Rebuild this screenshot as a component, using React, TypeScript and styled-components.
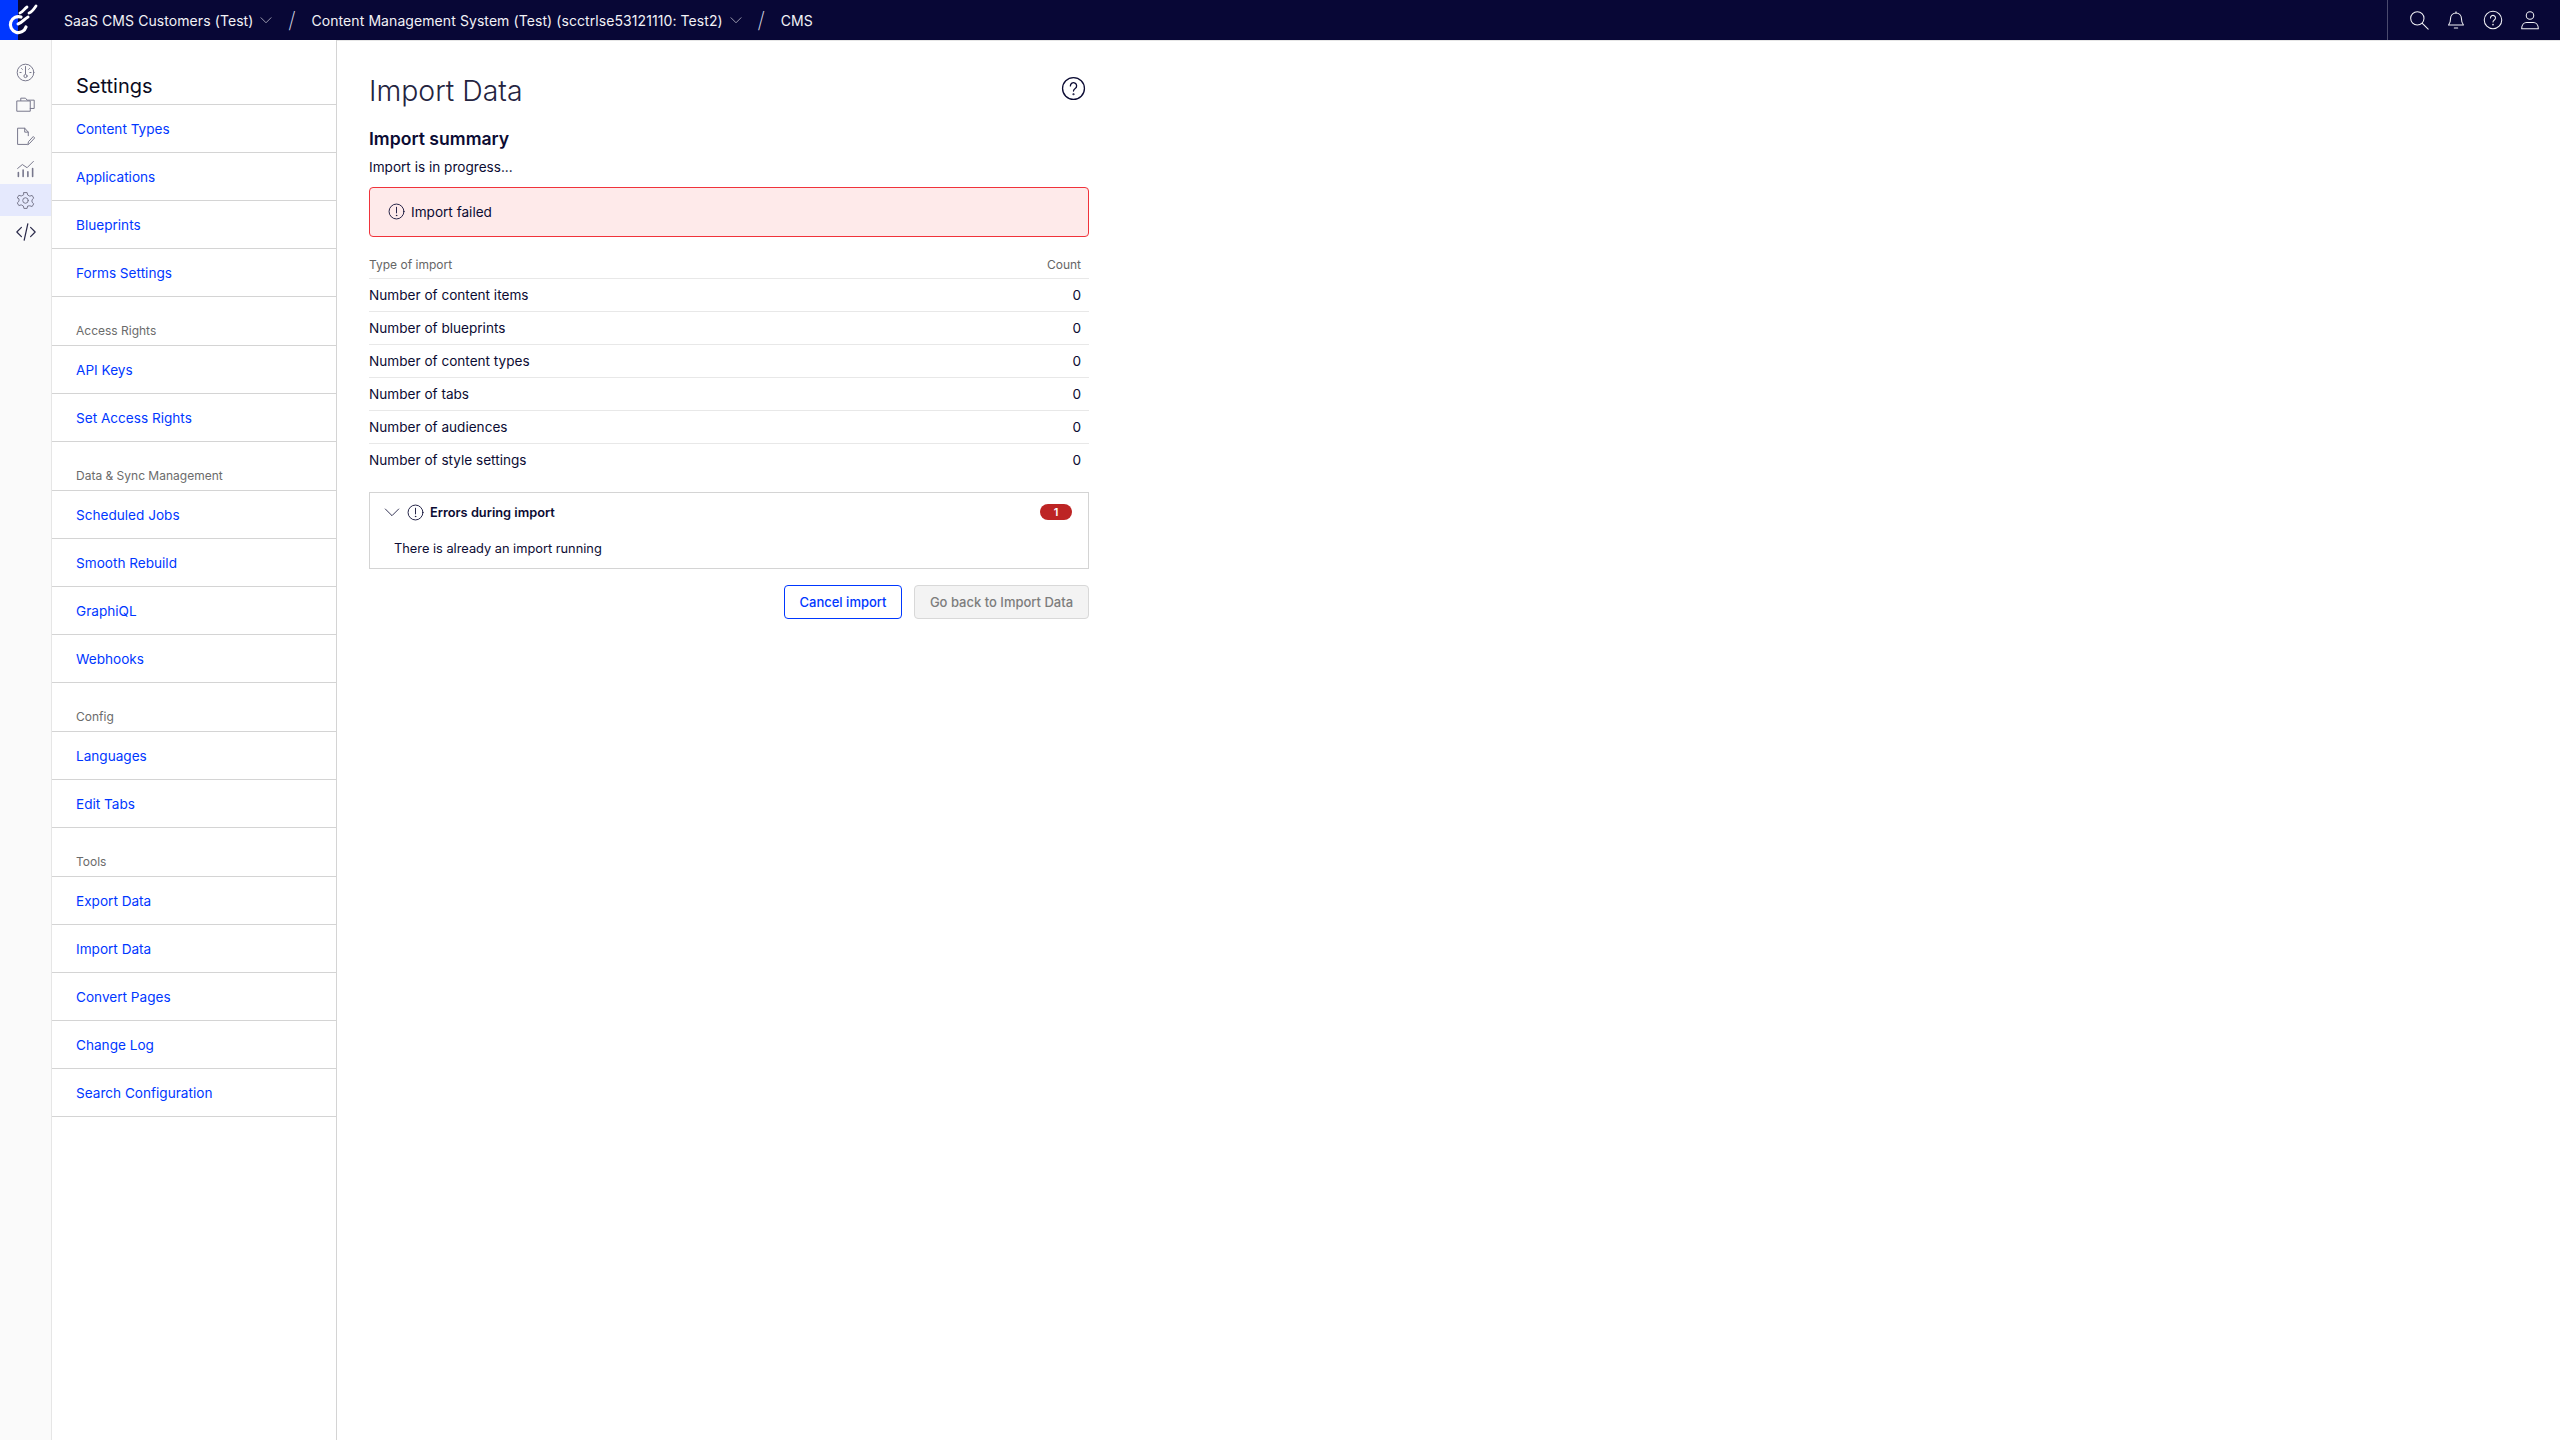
import React, { FunctionComponent } from "react";
import styled, { createGlobalStyle } from "styled-components";

const GlobalStyle = createGlobalStyle`
  html, body { margin: 0; padding: 0; background: #fff; }
  body { font-family: Inter, "Liberation Sans", sans-serif; color: #0b0b33; font-size: 13.6px; }
  * { box-sizing: border-box; }
`;

type Section = { label?: string; items: string[] };

const SECTIONS: Section[] = [
  { items: ["Content Types", "Applications", "Blueprints", "Forms Settings"] },
  { label: "Access Rights", items: ["API Keys", "Set Access Rights"] },
  { label: "Data & Sync Management", items: ["Scheduled Jobs", "Smooth Rebuild", "GraphiQL", "Webhooks"] },
  { label: "Config", items: ["Languages", "Edit Tabs"] },
  { label: "Tools", items: ["Export Data", "Import Data", "Convert Pages", "Change Log", "Search Configuration"] },
];

const ROWS = [
  "Number of content items",
  "Number of blueprints",
  "Number of content types",
  "Number of tabs",
  "Number of audiences",
  "Number of style settings",
];

const Svg: FunctionComponent<{ size: number; children: React.ReactNode }> = ({ size, children }) => (
  <svg width={size} height={size} viewBox="0 0 24 24" fill="none" stroke="currentColor" strokeWidth={1.25} strokeLinecap="round" strokeLinejoin="round">
    {children}
  </svg>
);

const Chevron = ({ size = 14 }: { size?: number }) => (
  <Svg size={size}><path d="M2 7.500l10 10 10-10" /></Svg>
);

const AlertIcon = ({ size = 16 }: { size?: number }) => (
  <Svg size={size}>
    <circle cx="12" cy="12" r="10.5" />
    <path d="M12 6v8" />
    <circle cx="12" cy="17.5" r=".4" />
  </Svg>
);

const HelpIcon = ({ size = 24 }: { size?: number }) => (
  <Svg size={size}>
    <circle cx="12" cy="12" r="10.5" />
    <path d="M9 9.500a3 3 0 1 1 4.600 2.500c-1 .7-1.600 1.300-1.600 2.500" />
    <circle cx="12" cy="17.5" r=".4" />
  </Svg>
);

const Logo = () => (
  <svg width="46" height="40" viewBox="0 0 46 40" fill="none" stroke="#fff" strokeLinecap="round">
    <path d="M21 17a8 8 0 1 0 5 10" strokeWidth="3.2" />
    <path d="M18 24c4-1 6-5 10-7" strokeWidth="3" />
    <path d="M20 13c3-1 4-4 7-6" strokeWidth="2.800" />
    <path d="M29 13c3-1 5-4 7-7" strokeWidth="2.800" />
  </svg>
);

const RAIL_ICONS: React.ReactNode[] = [
  <Svg size={19} key="dash"><circle cx="12" cy="12" r="10.500" /><path d="M12 4.500v9" /><circle cx="12" cy="16.500" r="2" /><path d="M5 12h1.500M17.500 12H19M7 7l1 1M17 7l-1 1" /></Svg>,
  <Svg size={19} key="folder"><path d="M6 7V4h6l2 2.500h9V17h-5" /><path d="M1.500 7.500H18v13H1.500z" /></Svg>,
  <Svg size={19} key="doc"><path d="M14 22H2V1.500h9l4.500 5V11" /><path d="M11 1.500v5h4.500" /><path d="M15 22l.8-3.500 6-6.500 1.800 1.800-6 6.500z" /></Svg>,
  <Svg size={19} key="chart"><path d="M3 22v-5M9 22v-8M15 22v-6M21 22v-10" strokeWidth={2} /><path d="M2 12l6-5 6 4 8-8" /></Svg>,
  <Svg size={19} key="gear"><circle cx="12" cy="12" r="3.500" /><path d="M10 2h4l.7 3 2.700 1.500 3-.9 2 3.400-2.200 2.100v3l2.200 2.100-2 3.400-3-.9L14.700 19l-.7 3h-4l-.7-3-2.700-1.500-3 .9-2-3.400 2.200-2.100v-3L1.600 8.800l2-3.400 3 .9L9.300 5z" /></Svg>,
  <Svg size={22} key="code"><path d="M7 7l-5 5 5 5M17 7l5 5-5 5M14 3l-4 18" strokeWidth={1.3} /></Svg>,
];

const App: FunctionComponent = () => (
  <>
    <GlobalStyle />
    <Page>
      <TopBar>
        <LogoBox><Logo /></LogoBox>
        <Crumbs>
          <Crumb>SaaS CMS Customers (Test)<Chevron size={12} /></Crumb>
          <Slash>/</Slash>
          <Crumb>Content Management System (Test) (scctrlse53121110: Test2)<Chevron size={12} /></Crumb>
          <Slash>/</Slash>
          <Crumb>CMS</Crumb>
        </Crumbs>
        <TopActions>
          <TopIcon>
            <Svg size={20}><circle cx="10" cy="10" r="8" /><path d="M16 16l7 7" /></Svg>
          </TopIcon>
          <TopIcon>
            <Svg size={20}><path d="M3 18c2-2 2.500-4 2.500-8a6.500 6.500 0 0 1 13 0c0 4 .5 6 2.500 8z" /><path d="M10 21.500h4M12 2v1.500" /></Svg>
          </TopIcon>
          <TopIcon><HelpIcon size={20} /></TopIcon>
          <TopIcon>
            <Svg size={20}><circle cx="12" cy="6.500" r="4.500" /><path d="M2 22.500c0-5 3-7.500 6-7.500h8c3 0 6 2.500 6 7.500z" /></Svg>
          </TopIcon>
        </TopActions>
      </TopBar>
      <Body>
        <Rail>
          {RAIL_ICONS.map((icon, i) => (
            <RailItem key={i} $active={i === 4}>{icon}</RailItem>
          ))}
        </Rail>
        <Sidebar>
          <SidebarTitle>Settings</SidebarTitle>
          {SECTIONS.map((section, i) => (
            <React.Fragment key={i}>
              {section.label && <SectionLabel>{section.label}</SectionLabel>}
              {section.items.map((item) => (
                <SideLink key={item}>{item}</SideLink>
              ))}
            </React.Fragment>
          ))}
        </Sidebar>
        <Main>
          <TitleRow>
            <Title>Import Data</Title>
            <HelpButton><HelpIcon size={25} /></HelpButton>
          </TitleRow>
          <Summary>Import summary</Summary>
          <Progress>Import is in progress...</Progress>
          <AlertBox><AlertIcon size={17} />Import failed</AlertBox>
          <Table>
            <thead>
              <tr>
                <HeadCell>Type of import</HeadCell>
                <HeadCell $right>Count</HeadCell>
              </tr>
            </thead>
            <tbody>
              {ROWS.map((row) => (
                <tr key={row}>
                  <Cell>{row}</Cell>
                  <Cell $right>0</Cell>
                </tr>
              ))}
            </tbody>
          </Table>
          <ErrorPanel>
            <ErrorHead>
              <Chevron size={16} />
              <AlertIcon size={17} />
              <ErrorTitle>Errors during import</ErrorTitle>
              <Badge>1</Badge>
            </ErrorHead>
            <ErrorText>There is already an import running</ErrorText>
          </ErrorPanel>
          <Actions>
            <CancelButton>Cancel import</CancelButton>
            <BackButton disabled>Go back to Import Data</BackButton>
          </Actions>
        </Main>
      </Body>
    </Page>
  </>
);

// STYLED COMPONENTS //
const Page = styled.div`
  width: 2560px;
  height: 1440px;
  display: flex;
  flex-direction: column;
  overflow: hidden;
`;
const TopBar = styled.header`
  height: 40px;
  flex: none;
  display: flex;
  align-items: center;
  background: #080736;
  color: #f2f2f6;
`;
const LogoBox = styled.div`
  width: 46px;
  height: 40px;
  flex: none;
  background: linear-gradient(90deg, #0037ff 18px, #080736 18px);
`;
const Crumbs = styled.div`
  display: flex;
  align-items: center;
  padding-left: 18px;
  flex: 1;
`;
const Crumb = styled.span`
  display: flex;
  align-items: center;
  gap: 7px;
  font-size: 14px;
  letter-spacing: 0.08px;
  white-space: nowrap;
`;
const Slash = styled.span`
  width: 39px;
  text-align: center;
  font-size: 22px;
  font-weight: 200;
  color: #d4d4e0;
`;
const TopActions = styled.div`
  height: 40px;
  display: flex;
  align-items: center;
  gap: 17px;
  padding: 0 20px 0 21px;
  border-left: 1px solid #4a4a6e;
`;
const TopIcon = styled.span`
  width: 20px;
  height: 20px;
  display: flex;
`;
const Body = styled.div`
  flex: 1;
  display: flex;
  min-height: 0;
`;
const Rail = styled.nav`
  width: 52px;
  flex: none;
  padding-top: 16px;
  background: #fafafa;
  border-right: 1px solid #e6e6e6;
  color: #77778c;
`;
const RailItem = styled.div<{ $active?: boolean }>`
  height: 32px;
  display: flex;
  align-items: center;
  justify-content: center;
  background: ${(p) => (p.$active ? "#e5e9fd" : "transparent")};
  &:last-child { color: #2a2a4a; }
`;
const Sidebar = styled.aside`
  width: 285px;
  flex: none;
  border-right: 1px solid #d4d4d4;
`;
const SidebarTitle = styled.h2`
  height: 65px;
  margin: 0;
  padding: 32px 0 0 24px;
  font-size: 20px;
  font-weight: 400;
  line-height: 28px;
  color: #0b0b22;
  border-bottom: 1px solid #d4d4d4;
`;
const SectionLabel = styled.div`
  height: 49px;
  padding: 26px 0 0 24px;
  font-size: 12px;
  line-height: 16px;
  color: #6b6b6b;
  border-bottom: 1px solid #d4d4d4;
`;
const SideLink = styled.a`
  height: 48px;
  display: flex;
  align-items: center;
  padding-left: 24px;
  font-size: 13.6px;
  color: #0037ff;
  border-bottom: 1px solid #d4d4d4;
`;
const Main = styled.main`
  flex: 1;
  padding: 0 1471px 0 32px;
  border-top: 1px solid #e6e6e6;
`;
const TitleRow = styled.div`
  height: 69px;
  padding-top: 30px;
  display: flex;
  align-items: center;
  justify-content: space-between;
`;
const Title = styled.h1`
  margin: 0;
  font-size: 28.4px;
  font-weight: 300;
  line-height: 40px;
  color: #24243f;
`;
const HelpButton = styled.span`
  display: flex;
  margin-right: 3px;
  margin-top: -4px;
  color: #0b0b33;
`;
const Summary = styled.h3`
  margin: 17px 0 0;
  font-size: 17.6px;
  font-weight: 600;
  line-height: 24px;
`;
const Progress = styled.p`
  margin: 6px 0 0;
  font-size: 13.6px;
  line-height: 20px;
`;
const AlertBox = styled.div`
  height: 50px;
  margin-top: 10px;
  display: flex;
  align-items: center;
  gap: 6px;
  padding: 0 0 1px 18px;
  font-size: 13.6px;
  background: #feeaea;
  border: 1px solid #f0333b;
  border-radius: 4px;
`;
const Table = styled.table`
  width: 100%;
  margin-top: 14px;
  border-collapse: collapse;
`;
const HeadCell = styled.th<{ $right?: boolean }>`
  height: 27px;
  padding: 0 ${(p) => (p.$right ? "8px" : "0")} 0 0;
  font-size: 12px;
  font-weight: 400;
  color: #666;
  text-align: ${(p) => (p.$right ? "right" : "left")};
  border-bottom: 1px solid #e8e8e8;
`;
const Cell = styled.td<{ $right?: boolean }>`
  height: 33px;
  padding: 0 ${(p) => (p.$right ? "8px" : "0")} 0 0;
  font-size: 13.6px;
  text-align: ${(p) => (p.$right ? "right" : "left")};
  border-bottom: 1px solid #e8e8e8;
  tr:last-child & { border-bottom: none; }
`;
const ErrorPanel = styled.section`
  height: 77px;
  margin-top: 16px;
  border: 1px solid #d4d4d4;
`;
const ErrorHead = styled.div`
  height: 38px;
  display: flex;
  align-items: center;
  gap: 7px;
  padding: 0 16px 0 14px;
`;
const ErrorTitle = styled.span`
  flex: 1;
  margin-left: -1px;
  font-size: 12.8px;
  font-weight: 600;
`;
const Badge = styled.span`
  width: 32px;
  height: 16px;
  display: flex;
  align-items: center;
  justify-content: center;
  font-size: 11px;
  font-weight: 600;
  color: #fff;
  background: #bd2424;
  border-radius: 8px;
`;
const ErrorText = styled.div`
  padding: 8px 0 0 24px;
  font-size: 12.8px;
  line-height: 20px;
`;
const Actions = styled.div`
  margin-top: 16px;
  display: flex;
  justify-content: flex-end;
  gap: 12px;
`;
const CancelButton = styled.button`
  width: 118px;
  height: 34px;
  padding: 0;
  font-family: inherit;
  font-size: 13px;
  font-weight: 500;
  color: #0037ff;
  background: #fff;
  border: 1px solid #0037ff;
  border-radius: 4px;
`;
const BackButton = styled.button`
  width: 175px;
  height: 34px;
  padding: 0;
  font-family: inherit;
  font-size: 13px;
  font-weight: 500;
  color: #7d7d7d;
  background: #f3f3f3;
  border: 1px solid #d8d8d8;
  border-radius: 4px;
`;

export default App;
